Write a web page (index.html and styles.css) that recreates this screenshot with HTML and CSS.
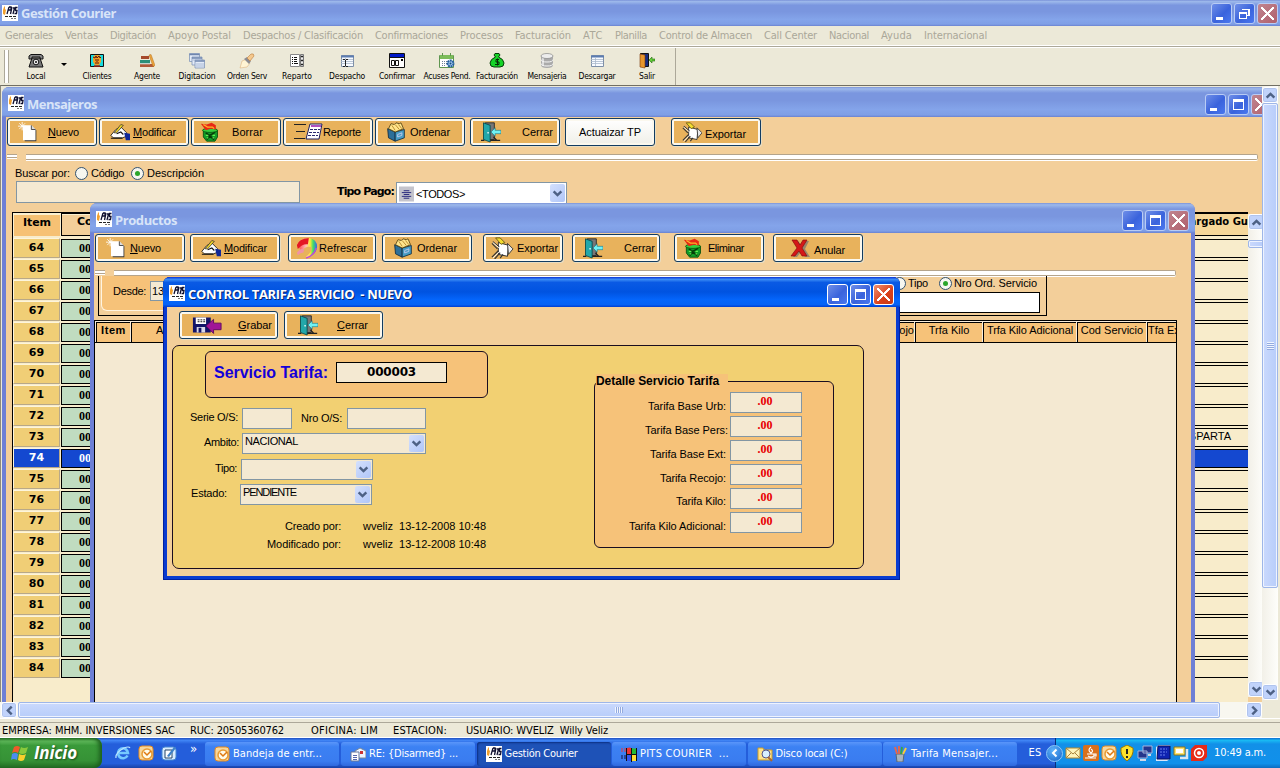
FILE: index.html
```html
<!DOCTYPE html>
<html lang="es">
<head>
<meta charset="utf-8">
<title>Gestión Courier</title>
<link rel="stylesheet" href="styles.css">
</head>
<body>
<svg class="defs" aria-hidden="true">
  <defs><linearGradient id="rb" x1="0" x2="1"><stop stop-color="#f33"/><stop offset=".45" stop-color="#fbb"/><stop offset=".65" stop-color="#fe3"/><stop offset=".8" stop-color="#4d6"/><stop offset="1" stop-color="#36e"/></linearGradient></defs>
  <symbol id="pits" viewBox="0 0 16 16"><rect width="16" height="16" fill="#fff"/><path d="M2 2l1-1v3l1 1-1 5-2-1V5z" fill="#f0a030"/><path d="M5 9l2-7M7 2h2v3H6M10 2L8.500 9M11 3h3M12.500 3L11 9M15.500 2.500h-2l0 3h1.500l-.5 3h-2" stroke="#101030" stroke-width="1.300" fill="none"/><path d="M3 11.500h12" stroke="#222" stroke-dasharray="3 1"/><path d="M9 13.500h6" stroke="#777" stroke-dasharray="2 1"/></symbol>
  <symbol id="phone" viewBox="0 0 16 16"><path d="M1 6V3l2-1.500h10L15 3v3h-3V4H4v2z" fill="#888" stroke="#111"/><path d="M4 5h8l3 9H1z" fill="#777" stroke="#111"/><circle cx="8" cy="9" r="2.800" fill="#eee" stroke="#111"/><circle cx="8" cy="9" r="1" fill="#111"/></symbol>
  <symbol id="clients" viewBox="0 0 16 16"><path d="M1.500 1.500h13v12h-13z" fill="#18dce0" stroke="#111"/><path d="M4 4l2-2h4l2 2v5l-2 3H6L4 9z" fill="#f0a028"/><path d="M4 4l2 1 1-2 1 2 2-2 1 2 1-1M6 7h1m2 0h1M6 10h4M8 6v3" stroke="#601808" fill="none"/><path d="M5 13h6" stroke="#a02010" stroke-width="1.500"/></symbol>
  <symbol id="books" viewBox="0 0 16 16"><path d="M2 3h8v3H2z" fill="#a64a2c"/><path d="M1 7h10v3.500H1z" fill="#2c8f78"/><path d="M1 11h14v3H1z" fill="#b05a38"/><path d="M10 2l2-.5 4 11-2 1z" fill="#eca53c" stroke="#b57020" stroke-width=".5"/><path d="M1 10.800h10" stroke="#ddd"/></symbol>
  <symbol id="sheets" viewBox="0 0 16 16"><g fill="#e3ebf8" stroke="#8296b8" stroke-width=".8"><path d="M.5.5h10v8H.5z"/><path d="M3 4h10v8H3z"/><path d="M6 7h9.500v8H6z"/></g><path d="M.5 1.500h10M3 5h10M6 8h9.500" stroke="#7086ae" stroke-width="1.600"/><path d="M7 11h8M7 13h8M4 7h8" stroke="#94a8c8" stroke-width=".7"/></symbol>
  <symbol id="brush" viewBox="0 0 16 16"><path d="M1 15l2-7 5-2 3 4-3 4z" fill="#fff4d4" stroke="#d9a870" stroke-width=".5"/><path d="M5 6l3-2 4 4-2 3z" fill="#8c8c92"/><path d="M8 5l4-4q3-1 3 2l-4 5z" fill="#f5c88c" stroke="#bb7d40" stroke-width=".6"/></symbol>
  <symbol id="report" viewBox="0 0 16 16"><path d="M1.500 1.500h9v12h-9z" fill="#fff" stroke="#888"/><path d="M3 4.500h1m1 0h3M3 6.500h1m1 0h3M3 8.500h1m1 0h3M3 10.500h1m1 0h4" stroke="#111"/><path d="M11.500 1.500h3v12h-3z" fill="#eee" stroke="#777"/><path d="M12 3.500h2m-2 4h2m-2 4h2" stroke="#222" stroke-width="1.500"/></symbol>
  <symbol id="table" viewBox="0 0 16 16"><path d="M2.500 2.500h12v11h-12z" fill="#f8fbff" stroke="#7f90a8"/><path d="M2 3.500h13" stroke="#5c7cb0" stroke-width="2"/><path d="M2 6.500h12M2 8.500h12M2 10.500h12M6.500 5v8" stroke="#a9b9cc" stroke-width=".8"/></symbol>
  <symbol id="dispatch" viewBox="0 0 16 16"><use href="#table"/><path d="M4 6.500h2m1 0h2M6.500 7v6M4 13.500h2m1 0h2" stroke="#222"/></symbol>
  <symbol id="calendar" viewBox="0 0 16 16"><path d="M.5.5h15v14H.5z" fill="#fff" stroke="#111"/><path d="M1 2.500h14" stroke="#0018c8" stroke-width="3"/><path d="M1 4.500h14M2.500 7.500h3v5h-3zm4 0h3v5h-3z" fill="none" stroke="#111"/><path d="M12 6h2v2h-2z"/></symbol>
  <symbol id="pend" viewBox="0 0 16 16"><path d="M.5 2.500h14v12H.5z" fill="#fff" stroke="#5f9650"/><path d="M1 4h13" stroke="#7dbc5a" stroke-width="4"/><path d="M3.500 0v3m8-3v3" stroke="#5f9650"/><path d="M3 8.500h5M3 10.500h5M3 12.500h4" stroke="#6d7f9a" stroke-dasharray="1 1"/><circle cx="11.500" cy="10.500" r="3" fill="#9fc6ee" stroke="#255f9f" stroke-width="2" stroke-dasharray="2 .6"/><circle cx="11.500" cy="10.500" r="1" fill="#174d80"/></symbol>
  <symbol id="money" viewBox="0 0 16 16"><path d="M6 .5h4L11 2 9.500 4q5 2 5.500 6 0 4-4 4H5q-4 0-4-4 .5-4 5.500-6L5 2z" fill="#16d428" stroke="#063c08"/><path d="M10 6.500H7V9h3v2.500H6M8.500 5.500v7" fill="none" stroke="#052c06"/></symbol>
  <symbol id="database" viewBox="0 0 16 16"><path d="M2 3v9q0 3 6 3t6-3V3" fill="#aaa"/><path d="M4 4v9" stroke="#ddd" stroke-width="2"/><ellipse cx="8" cy="3" rx="6" ry="2.500" fill="#ededed" stroke="#888" stroke-width=".7"/><path d="M2 6.500q0 2.500 6 2.500t6-2.500M2 10.500q0 2.500 6 2.500t6-2.500" fill="none" stroke="#f6f6f6"/></symbol>
  <symbol id="exit" viewBox="0 0 16 16"><path d="M1.500.5h8v13h-8z" fill="#182c80" stroke="#111"/><path d="M1 1l5 1v13l-5-1z" fill="#e8962c" stroke="#7a3808" stroke-width=".6"/><path d="M10 7l3-3v2h3v2h-3v2z" fill="#62cc38" stroke="#216b0c" stroke-width=".6"/></symbol>
  <symbol id="new" viewBox="0 0 24 24"><path d="M8 5h9l5 5v13H8z" fill="#333"/><path d="M6 4h10l5 5v13H6z" fill="#fff"/><path d="M16 4v5h5" fill="#ddd" stroke="#333"/><path d="M5 0v10M0 5h10M1.500 1.500l7 7M8.500 1.500l-7 7" stroke="#fff"/></symbol>
  <symbol id="edit" viewBox="0 0 24 20"><path d="M1 14l6-7 6-3 7 7v4l-5 2H4z" fill="#fff" stroke="#111"/><path d="M17 11l7 1v8h-5z" fill="#102898"/><path d="M5 11L13 1l3 1-8 9z" fill="#f0d428" stroke="#222" stroke-width=".8"/><path d="M1 17.500h14M8 12l5-2 3 3" fill="none" stroke="#111" stroke-width="1.300"/></symbol>
  <symbol id="bin" viewBox="0 0 24 24"><path d="M4 10h17v8l-3 5H8l-4-5z" fill="#119c28" stroke="#064d0c"/><path d="M7 13l4 3 3-1 4-3M8 21l4-4 5 4" stroke="#063c08" stroke-width="2" fill="none"/><path d="M7 16h3M15 16h3M8 19h2m5 0h2" stroke="#64f050" stroke-width="1.500"/><ellipse cx="12" cy="10" rx="9" ry="2.500" fill="#35cf3c" stroke="#075210"/><path d="M1 2l7 1 6-2 5 3v5l-6-1-6 2z" fill="#e82814"/><path d="M4 3l5 3h6l2 2" stroke="#ffb428" fill="none" stroke-width="1.500"/></symbol>
  <symbol id="rep" viewBox="0 0 30 20"><path d="M1 2.500h12M3 9.500h9M1 16.500h11" stroke="#222"/><path d="M17 2h12l-3 15H13z" fill="#fff" stroke="#202060"/><path d="M18 4h10" stroke="#b050c0" stroke-width="2"/><path d="M17 7.500h10M16 10.500h10M15 13.500h10" stroke="#2a2a70" stroke-dasharray="3 1"/></symbol>
  <symbol id="sort" viewBox="0 0 24 24"><path d="M2 8l9 4v11l-8-4z" fill="#2d6f98" stroke="#0d2940"/><path d="M11 12l11-3v10l-11 4z" fill="#479cc4" stroke="#0d2940"/><path d="M3 8l3-6 4 1 2-2 4 1 2-1 3 7-10 4z" fill="#ffe58c" stroke="#514010"/><path d="M7 4l4 6M11 3l5 6M15 3l4 5" stroke="#b07d20"/><path d="M14 15l5-2v3l-5 2z" fill="none" stroke="#cce"/></symbol>
  <symbol id="close" viewBox="0 0 24 24"><path d="M5 1h11v20H5z" fill="#777" stroke="#222"/><path d="M3 1l8 3v20l-8-3z" fill="#22a7aa" stroke="#064548"/><path d="M12 12l5-5v3h7v4h-7v3z" fill="#70f2f4" stroke="#147080" stroke-width=".7"/><path d="M0 22h4m7 0h12M15 18l4 4" stroke="#222" stroke-width="1.500"/><circle cx="8.500" cy="13" r="1" fill="#fff"/></symbol>
  <symbol id="export" viewBox="0 0 24 24"><path d="M8 6l11 3-1 12-10-2z" fill="#fff" stroke="#222"/><path d="M18 7l6 6-5 6z" fill="#eaeaea" stroke="#333"/><path d="M5 1l5 0 5 5-4 2z" fill="#f3dc30" stroke="#6a5b10"/><path d="M2 5l7 6M1 7l6 6M1 22l7-7M4 24l6-7m0 6l3-4" stroke="#333" stroke-width="1.300"/><path d="M2 6l7 6M2 23l7-7" stroke="#fff"/></symbol>
  <symbol id="refresh" viewBox="0 0 24 24"><path d="M1 9q2-7 13-8 9 1 9 10-1 8-10 12l-2-2q6-3 6-10-6-2-11 4z" fill="url(#rb)"/><path d="M1 9q2-7 13-8l-1 7q-6-1-11 5z" fill="#e51824"/><path d="M1 17q5-6 8-3l-1 3q-3 0-6 3z" fill="#f092a8"/><path d="M11 23q9-3 11-11" stroke="#bf45dc" stroke-width="1.500" fill="none"/></symbol>
  <symbol id="cancel" viewBox="0 0 20 20"><path d="M4 4l4-1 4 5 3-5h4l-4 8 5 8h-5l-4-5-4 5H3l5-8z" fill="#99846a"/><path d="M2 2h5l3 5 3-5h4l-5 8 5 8h-5l-3-5-4 5H1l6-8z" fill="#d41818" stroke="#7c0808" stroke-width=".6"/></symbol>
  <symbol id="save" viewBox="0 0 32 20"><path d="M1 2h19v16H1z" fill="#121468"/><path d="M4 2h11v7H4z" fill="#fff"/><path d="M6 4.500h8M6 6.500h8" stroke="#111" stroke-dasharray="2 1"/><path d="M5 12h9v6H5z" fill="#d8d8e8"/><path d="M7 13h3v5H7z" fill="#121468"/><path d="M15 11l8-7v4h8v7h-8v4z" fill="#a01498" stroke="#600c60"/></symbol>
  <symbol id="flag" viewBox="0 0 18 18"><path d="M3 3q3-2 6 0L7 9Q4 7 1 9z" fill="#ef5a2a"/><path d="M10 3q3 2 7 0l-2 6q-4 2-7 0z" fill="#89c93c"/><path d="M1 10q3-2 6 0l-1 6q-4-2-6 0z" fill="#4a8df0"/><path d="M8 10q4 2 7 0l-2 6q-3 2-6 0z" fill="#f9cf2c"/></symbol>
  <symbol id="ie" viewBox="0 0 16 16"><path d="M12.500 10.500A5 5 0 1 1 13 8H4" fill="none" stroke="#75c9ff" stroke-width="2.600"/><path d="M1 13Q0 8 9 3q5-2 6 0" fill="none" stroke="#bde6ff" stroke-width="1.200"/></symbol>
  <symbol id="outlook" viewBox="0 0 16 16"><rect x="1" y="1" width="14" height="14" rx="3" fill="#f7d79c" stroke="#e58a1f"/><circle cx="9" cy="9" r="5" fill="#fffbe8" stroke="#e89b33" stroke-width="1.500"/><path d="M6 7l3 3 4-4" fill="none" stroke="#df7810" stroke-width="1.500"/></symbol>
  <symbol id="desk" viewBox="0 0 16 16"><rect x="1" y="2" width="14" height="13" rx="3" fill="#d8ecff" stroke="#4688d0"/><path d="M4 5h7v8H4z" fill="#fff" stroke="#246"/><path d="M6 11l7-9 2 1-7 9z" fill="#3e82c8"/></symbol>
  <symbol id="mail" viewBox="0 0 16 16"><path d="M5 5l5-3 6 3v7H5z" fill="#eef4ff" stroke="#789"/><path d="M1 6h8v9H1z" fill="#fff" stroke="#679"/><path d="M3 9.500h4M3 11.500h4M3 13.500h4" stroke="#56a"/><path d="M10 5h3v3h-3z" fill="#c33"/></symbol>
  <symbol id="win98" viewBox="0 0 16 16"><path d="M6 2q3-1 4 0V8H6z" fill="#e33"/><path d="M0 3h5M0 5h5" stroke="#e33" stroke-dasharray="2 1"/><path d="M11 2q2 1 5 0v6q-3 1-5 0z" fill="#2b3"/><path d="M6 9h4v6H6z" fill="#35e"/><path d="M0 10h5M0 12h5" stroke="#114" stroke-dasharray="2 1"/><path d="M11 9h5v6h-5z" fill="#fd3"/><path d="M5.500 2v13M10.500 2v14M15.500 2v13M6 8.500h10" stroke="#111"/></symbol>
  <symbol id="folder" viewBox="0 0 16 16"><path d="M1 2h5l1 2h8v10H1z" fill="#ffe28a" stroke="#c79b2d"/><circle cx="9" cy="8" r="4" fill="#d8efff" stroke="#558"/><path d="M11 11l4 4" stroke="#a63" stroke-width="2"/></symbol>
  <symbol id="paint" viewBox="0 0 16 16"><path d="M4 8h8l-1 8H5z" fill="#a9b4be" stroke="#567"/><path d="M5 8L3 1M7 8V0" stroke="#e64" stroke-width="1.800"/><path d="M9 8l1-7" stroke="#3a4" stroke-width="1.800"/><path d="M11 8l3-6" stroke="#fc3" stroke-width="1.800"/></symbol>
  <symbol id="env" viewBox="0 0 16 16"><path d="M1 3h14v10H1z" fill="#fff4b8" stroke="#b18831"/><path d="M1 3l7 6 7-6M1 13l5-5m9 5l-5-5" fill="none" stroke="#a9823a"/></symbol>
  <symbol id="java" viewBox="0 0 16 16"><rect width="16" height="16" rx="2" fill="#d9701c"/><path d="M8 2q-4 3 0 6 3-2 0-4M4 9h7v2q-3 2-6 0M2 13h11M11 9h2v2h-2" fill="none" stroke="#fff" stroke-width="1.200"/></symbol>
  <symbol id="shield" viewBox="0 0 16 16"><path d="M8 0l6 3q1 8-6 13Q1 11 2 3z" fill="#ffe22c" stroke="#9b7900"/><path d="M8 4v5m0 2v2" stroke="#222" stroke-width="2"/></symbol>
  <symbol id="net" viewBox="0 0 16 16"><path d="M6 1h9v7H6zM1 6h9v7H1z" fill="#24358c" stroke="#a4b3dc"/><path d="M3 15h6m2-5h3" stroke="#cfd8e8" stroke-width="2"/></symbol>
  <symbol id="pad" viewBox="0 0 16 16"><path d="M1 2l3-2h11v14l-3 2H1z" fill="#dce5f8"/><path d="M3 1h12v13H2z" fill="#0e23b0" stroke="#06105a"/><path d="M5 4h7M5 7h7M5 10h6" stroke="#6b83ec" stroke-dasharray="2 1"/></symbol>
  <symbol id="mon" viewBox="0 0 16 16"><path d="M1 2h11v8H1z" fill="#ffe36a" stroke="#8a741b"/><path d="M3 4h7v4H3z" fill="#fff"/><path d="M7 13h7V4" fill="none" stroke="#dde6f0" stroke-width="2.500"/></symbol>
  <symbol id="eye" viewBox="0 0 16 16"><path d="M4 0h12v12l-4 4H0V4z" fill="#e52a17"/><circle cx="8" cy="8" r="4.500" fill="none" stroke="#fff" stroke-width="1.500"/><circle cx="8" cy="8" r="2" fill="#fff"/></symbol>
  <symbol id="down" viewBox="0 0 10 10"><path d="M1.500 3L5 6.500 8.500 3" fill="none" stroke="#4d6185" stroke-width="2.200"/></symbol>
</svg>

<header class="title app-title idle"><svg class="i16"><use href="#pits"/></svg><b data-w="95">Gestión Courier</b><div class="ctl"><i class="min"></i><i class="rest"></i><i class="x"></i></div></header>
<nav class="menu"><span data-w="48">Generales</span><span data-w="33">Ventas</span><span data-w="46">Digitación</span><span data-w="63">Apoyo Postal</span><span data-w="120">Despachos / Clasificación</span><span data-w="73">Confirmaciones</span><span data-w="43">Procesos</span><span data-w="56">Facturación</span><span data-w="20">ATC</span><span data-w="32">Planilla</span><span data-w="93">Control de Almacen</span><span data-w="53">Call Center</span><span data-w="40">Nacional</span><span data-w="31">Ayuda</span><span data-w="63">Internacional</span></nav>
<div class="toolbar"><div class="tools">
  <div class="grip"></div>
  <div class="tool"><svg><use href="#phone"/></svg><span data-w="19">Local</span></div><div class="drop"></div>
  <div class="tool"><svg><use href="#clients"/></svg><span data-w="29">Clientes</span></div>
  <div class="tool"><svg><use href="#books"/></svg><span data-w="26">Agente</span></div>
  <div class="tool"><svg><use href="#sheets"/></svg><span data-w="37">Digitacion</span></div>
  <div class="tool"><svg><use href="#brush"/></svg><span data-w="40">Orden Serv</span></div>
  <div class="tool"><svg><use href="#report"/></svg><span data-w="30">Reparto</span></div>
  <div class="tool"><svg><use href="#dispatch"/></svg><span data-w="36">Despacho</span></div>
  <div class="tool"><svg><use href="#calendar"/></svg><span data-w="36">Confirmar</span></div>
  <div class="tool"><svg><use href="#pend"/></svg><span data-w="47">Acuses Pend.</span></div>
  <div class="tool"><svg><use href="#money"/></svg><span data-w="42">Facturación</span></div>
  <div class="tool"><svg><use href="#database"/></svg><span data-w="39">Mensajeria</span></div>
  <div class="tool"><svg><use href="#table"/></svg><span data-w="37">Descargar</span></div>
  <div class="tool"><svg><use href="#exit"/></svg><span data-w="16">Salir</span></div>
</div></div>

<div class="workspace">
<main class="mdi">
  <section class="win w-mens">
    <div class="title idle"><svg class="i16"><use href="#pits"/></svg><b data-w="70">Mensajeros</b><div class="ctl"><i class="min"></i><i class="max"></i><i class="x"></i></div></div>
    <div class="body">
      <div class="btns">
        <button><svg class="ic"><use href="#new"/></svg><span class="g10" data-w="31"><u>N</u>uevo</span></button>
        <button><svg class="ic"><use href="#edit"/></svg><span class="g2" data-w="43"><u>M</u>odificar</span></button>
        <button><svg class="ic up1"><use href="#bin"/></svg><span class="g10" data-w="31">Borrar</span></button>
        <button><svg class="wide"><use href="#rep"/></svg><span data-w="38">Reporte</span></button>
        <button><svg class="ic"><use href="#sort"/></svg><span class="g4" data-w="40">Ordenar</span></button>
        <button class="m3"><svg class="ic"><use href="#close"/></svg><span class="g20" data-w="31">Cerrar</span></button>
        <button class="m3 white"><span data-w="62">Actuaizar TP</span></button>
        <button class="m14"><svg class="ic"><use href="#export"/></svg><span class="g2 low" data-w="41">Exportar</span></button>
      </div>
      <div class="rule"><i></i></div>
      <div class="find"><span data-w="55">Buscar por:</span><i class="radio"></i><span data-w="33">Código</span><i class="radio on"></i><span data-w="57">Descripción</span></div>
      <div class="findrow"><div class="inp"></div><b data-w="57">Tipo Pago:</b><div class="combo pay"><svg viewBox="0 0 16 16"><path d="M0 0h16v16H0z" fill="#c4c4cc"/><path d="M5 4.500h6M3 6.500h10M5 8.500h6M3 10.500h10M5 12.500h6" stroke="#22227a"/></svg><span data-w="49">&lt;TODOS&gt;</span><em><svg><use href="#down"/></svg></em></div></div>
      <div class="listwrap">
        <div class="list">
          <div class="lh"><b><span data-w="28">Item</span></b><b class="cod">Co</b><b class="enc"><span>argado Gu</span></b></div>
          <div id="rows"></div>
        </div>
        <div class="vs inner"><em class="up"><svg><use href="#down"/></svg></em><div class="thumb"></div><em class="dn"><svg><use href="#down"/></svg></em></div>
      </div>
    </div>
  </section>

  <section class="win w-prod">
    <div class="title idle"><svg class="i16"><use href="#pits"/></svg><b data-w="62">Productos</b><div class="ctl"><i class="min"></i><i class="max"></i><i class="x"></i></div></div>
    <div class="body">
      <div class="btns">
        <button><svg class="ic"><use href="#new"/></svg><span class="g4" data-w="31"><u>N</u>uevo</span></button>
        <button class="m3"><svg class="ic"><use href="#edit"/></svg><span class="g2" data-w="43"><u>M</u>odificar</span></button>
        <button class="m6 b88"><svg class="ic tight"><use href="#refresh"/></svg><span data-w="48">Refrescar</span></button>
        <button class="m4"><svg class="ic"><use href="#sort"/></svg><span class="g4" data-w="40">Ordenar</span></button>
        <button class="m9 b80"><svg class="ic tight"><use href="#export"/></svg><span class="g2" data-w="41">Exportar</span></button>
        <button class="m7 b88"><svg class="ic"><use href="#close"/></svg><span class="g20" data-w="31">Cerrar</span></button>
        <button class="m12"><svg class="ic up1"><use href="#bin"/></svg><span class="g2" data-w="36">Eliminar</span></button>
        <button class="m7"><svg class="ic far"><use href="#cancel"/></svg><span class="low g4" data-w="31">Anular</span></button>
      </div>
      <div class="rule"><i></i></div>
      <div class="filter">
        <div class="fl"><span data-w="33">Desde:</span><div class="date">13</div></div>
        <div class="fr"><div class="opts"><i class="radio"></i><span data-w="20">Tipo</span><i class="radio on"></i><span data-w="83">Nro Ord. Servicio</span></div><div class="inp2"></div></div>
      </div>
      <div class="pgrid"><div class="ph"><b class="c1" data-w="25">Item</b><span class="c2">Ar</span><span class="c3">Recojo</span><span class="c4">Trfa Kilo</span><span class="c5">Trfa Kilo Adicional</span><span class="c6">Cod Servicio</span><span class="c7">Tfa Ex</span></div></div>
    </div>
  </section>

  <section class="win w-dlg">
    <div class="title active"><svg class="i16"><use href="#pits"/></svg><b data-w="224">CONTROL TARIFA SERVICIO  - NUEVO</b><div class="ctl"><i class="min"></i><i class="max"></i><i class="x"></i></div></div>
    <div class="body">
      <div class="btns">
        <button><svg class="wide"><use href="#save"/></svg><span class="g14" data-w="34"><u>G</u>rabar</span></button>
        <button><svg class="ic"><use href="#close"/></svg><span class="g17" data-w="31"><u>C</u>errar</span></button>
      </div>
      <div class="panel">
        <div class="left">
          <div class="serv"><b data-w="114">Servicio Tarifa:</b><div><strong data-w="49">000003</strong></div></div>
          <div class="ln l1"><span data-w="48">Serie O/S:</span><div class="inp w50"></div><span class="nro" data-w="41">Nro O/S:</span><div class="inp w79"></div></div>
          <div class="ln l2"><span data-w="35">Ambito:</span><div class="combo w184"><span data-w="53">NACIONAL</span><em><svg><use href="#down"/></svg></em></div></div>
          <div class="ln l3"><span data-w="22">Tipo:</span><div class="combo w132"><em><svg><use href="#down"/></svg></em></div></div>
          <div class="ln l4"><span data-w="36">Estado:</span><div class="combo w132"><span data-w="53">PENDIENTE</span><em><svg><use href="#down"/></svg></em></div></div>
          <div class="log l5"><span data-w="56">Creado por:</span><span data-w="123">wveliz  13-12-2008 10:48</span></div>
          <div class="log"><span data-w="74">Modificado por:</span><span data-w="123">wveliz  13-12-2008 10:48</span></div>
        </div>
        <div class="detail">
          <h2><span data-w="123">Detalle Servicio Tarifa</span></h2>
          <div class="t"><span data-w="78">Tarifa Base Urb:</span><b>.00</b></div>
          <div class="t pers"><span data-w="83">Tarifa Base Pers:</span><b>.00</b></div>
          <div class="t"><span data-w="76">Tarifa Base Ext:</span><b>.00</b></div>
          <div class="t"><span data-w="66">Tarifa Recojo:</span><b>.00</b></div>
          <div class="t kilo"><span data-w="50">Tarifa Kilo:</span><b>.00</b></div>
          <div class="t"><span data-w="97">Tarifa Kilo Adicional:</span><b>.00</b></div>
        </div>
      </div>
    </div>
  </section>
</main>
<div class="vs outer"><em class="up"><svg><use href="#down"/></svg></em><div class="thumb"><i></i></div><em class="dn"><svg><use href="#down"/></svg></em></div>
</div>
<div class="hs"><em class="lf"><svg><use href="#down"/></svg></em><div class="thumb"><i></i></div><em class="rt"><svg><use href="#down"/></svg></em></div>
<div class="status"><span data-w="173">EMPRESA: MHM. INVERSIONES SAC</span><span class="s2" data-w="94">RUC: 20505360762</span><span class="s3" data-w="67">OFICINA: LIM</span><span class="s4" data-w="54">ESTACION:</span><span class="s5" data-w="142">USUARIO: WVELIZ  Willy Veliz</span></div>
<footer class="task">
  <div class="start"><svg><use href="#flag"/></svg><b data-w="43">Inicio</b></div>
  <div class="quick"><svg><use href="#ie"/></svg><svg><use href="#outlook"/></svg><svg><use href="#desk"/></svg><span>»</span></div>
  <div class="tb"><svg><use href="#outlook"/></svg><span data-w="89">Bandeja de entr...</span></div>
  <div class="tb"><svg><use href="#mail"/></svg><span data-w="89">RE: {Disarmed} ...</span></div>
  <div class="tb cur"><svg><use href="#pits"/></svg><span data-w="73">Gestión Courier</span></div>
  <div class="tb"><svg><use href="#win98"/></svg><span data-w="89">PITS COURIER  ...</span></div>
  <div class="tb"><svg><use href="#folder"/></svg><span data-w="72">Disco local (C:)</span></div>
  <div class="tb"><svg><use href="#paint"/></svg><span data-w="87">Tarifa Mensajer...</span></div>
  <span class="es" data-w="13">ES</span>
  <div class="tray"><div class="chev"><svg viewBox="0 0 10 10"><path d="M6.500 1.500L3 5l3.500 3.500" fill="none" stroke="#fff" stroke-width="2"/></svg></div><svg><use href="#env"/></svg><svg><use href="#java"/></svg><svg><use href="#outlook"/></svg><svg><use href="#shield"/></svg><svg><use href="#net"/></svg><svg><use href="#pad"/></svg><svg><use href="#mon"/></svg><svg><use href="#eye"/></svg><span class="clock" data-w="52">10:49 a.m.</span></div>
</footer>
<script src="app.js"></script>
</body>
</html>
```

FILE: app.js
```js
// Fill the messenger list.
const rows = document.getElementById('rows');
for (let n = 64; n <= 84; n++) {
  const row = document.createElement('div');
  row.className = 'row' + (n === 74 ? ' sel' : '');
  row.innerHTML = `<b>${n}</b><b class="cod">00</b><span class="rest">${n === 73 ? 'SPARTA' : ''}</span>`;
  rows.append(row);
}

// Track each label so that it takes the width declared in data-w.
document.querySelectorAll('[data-w]').forEach(el => {
  const r = document.createRange();
  r.selectNodeContents(el);
  const natural = r.getBoundingClientRect().width;
  const spacing = (el.dataset.w - natural) / el.textContent.length;
  el.style.letterSpacing = spacing.toFixed(3) + 'px';
});
```

FILE: styles.css
```css
*, *::before { box-sizing: border-box; }
body { margin: 0; width: 1280px; height: 768px; overflow: hidden; display: flex; flex-direction: column; background: #ece9d8; font: 11px/14px "DejaVu Sans Condensed", "DejaVu Sans", sans-serif; color: #000; }
[data-w], .title b { white-space: pre; }
em, i { font-style: normal; }
.defs { position: absolute; width: 0; height: 0; }
svg { display: block; flex: none; }
.i16 { width: 16px; height: 16px; margin-top: -3px; }

/* title bars */
.title { display: flex; align-items: center; height: 30px; flex: none; padding: 4px 6px 0 6px; gap: 3px; }
.title b { font: bold 13px/18px "Open Sans", "Noto Sans", sans-serif; }
.idle { background: linear-gradient(#7a92d8 0, #9db9eb 6%, #7a96df 20%, #7a96df 45%, #84a4ea 75%, #7f9fe6 93%, #6a82d0); color: #d8e4f8; }
.active { background: linear-gradient(#0831d9 0, #3b8cf5 8%, #0a5ae4 18%, #0053e1 50%, #0465fb 75%, #0562f5 92%, #003dd0); color: #fff; text-shadow: 1px 1px #0a246a; }
.app-title { height: 26px; padding: 0 2px; }
.app-title .i16 { margin-top: 0; }
.ctl { margin-left: auto; display: flex; gap: 2px; }
.ctl i { width: 21px; height: 21px; border: 1px solid #b9ccf5; border-radius: 3px; background: linear-gradient(135deg, #6f8fe8, #3a63dc 55%, #4a78ef); display: grid; place-items: center; }
.ctl i::before { content: ""; }
.ctl .min::before { width: 7px; height: 3px; background: #fff; margin: 10px 5px 0 0; }
.ctl .max::before { width: 11px; height: 11px; border: 1px solid #fff; border-top-width: 3px; }
.ctl .rest::before { width: 8px; height: 7px; border: 1px solid #fff; border-top-width: 2px; margin: 4px 4px 0 0; box-shadow: 2px -3px 0 -1px #4a6fe0, 3px -3px 0 0 #fff; }
.ctl .x { background: linear-gradient(135deg, #c08590, #b0606c); }
.ctl .x::before { width: 13px; height: 13px; background: linear-gradient(45deg, transparent 44%, #fff 44% 56%, transparent 56%), linear-gradient(-45deg, transparent 44%, #fff 44% 56%, transparent 56%); }
.active .ctl i { border-color: #fff; }
.active .ctl .x { background: linear-gradient(135deg, #f09070, #d9401a 60%, #c83a12); }

.menu { height: 21px; flex: none; display: flex; gap: 12px; padding: 2px 0 0 5px; color: #aaa798; border-bottom: 1px solid #aca899; box-shadow: inset 0 -1px #fff; }
.menu span { line-height: 15px; }
.toolbar { height: 39px; flex: none; border-top: 1px solid #fff; border-bottom: 1px solid #aca899; }
.tools { height: 37px; display: flex; width: 676px; border-right: 1px solid #aca899; }
.grip { width: 5px; margin: 2px 2px 2px 4px; border: 1px solid #aca899; border-width: 0 1px; background: #fff; }
.tool { width: 50px; display: flex; flex-direction: column; align-items: center; padding-top: 5px; }
.tool svg { width: 16px; height: 16px; }
.tool span { font: 8.500px/11px "DejaVu Sans Condensed", sans-serif; margin-top: 2px; }
.drop { width: 11px; padding-top: 15px; }
.drop::before { content: ""; display: block; width: 0; border: 3px solid transparent; border-top-color: #000; }

/* document area */
.workspace { flex: none; display: flex; border-left: 1px solid #8d8a7c; border-top: 1px solid #716f64; margin-top: -1px; height: 617px; }
.mdi { position: relative; width: 1261px; height: 616px; overflow: hidden; background: #ece9d8; }
.win { position: absolute; border-radius: 7px 7px 0 0; overflow: hidden; display: flex; flex-direction: column; background: #6d7fd6; }
.w-mens { left: 1px; top: 1px; width: 1276px; height: 640px; }
.w-prod { left: 89px; top: 117px; width: 1105px; height: 520px; }
.w-dlg { left: 162px; top: 191px; width: 737px; height: 303px; background: #0a3bd0; box-shadow: inset 0 0 0 1px #0020a0; }
.body { background: #f3cf9a; flex: 1; margin: 0 4px; display: flex; flex-direction: column; min-height: 0; }
.w-dlg .body { margin-bottom: 4px; }

.btns { display: flex; gap: 2px; padding: 1px 0 0 1px; font: 11px/14px "Liberation Sans", sans-serif; flex: none; }
button { width: 90px; height: 28px; flex: none; border: 1px solid #123c62; border-radius: 3px; background: #e8b25c; box-shadow: inset 0 0 0 2px #fbf8ee, 1px 1px #e8dcc0; padding: 0 0 0 10px; margin: 0; display: flex; align-items: center; font: inherit; color: #000; overflow: hidden; }
button .ic { width: 20px; height: 22px; }
button .ic.up1 { margin-left: -2px; margin-right: 2px; }
button .wide { width: 30px; height: 20px; margin-left: -1px; }
button.white { background: linear-gradient(#fff, #f0efe8); padding-left: 13px; }
.g2 { margin-left: 3px; } .g4 { margin-left: 4px; } .g10 { margin-left: 10px; } .g14 { margin-left: 16px; } .g17 { margin-left: 19px; } .g20 { margin-left: 21px; }
.low { padding-top: 3px; }
.m3 { margin-left: 3px; } .m4 { margin-left: 4px; } .m6 { margin-left: 6px; } .m7 { margin-left: 7px; } .m9 { margin-left: 9px; } .m12 { margin-left: 12px; } .m14 { margin-left: 14px; }
.b88 { width: 88px; } .b80 { width: 80px; }
button .ic.tight { width: 24px; margin-left: -4px; }
button .ic.far { margin-left: 6px; }
.rule { height: 5px; margin: 8px 0 0 1px; display: flex; flex: none; width: 1251px; gap: 9px; }
.rule i, .rule::after { content: ""; border: 1px solid #b4a48c; border-width: 1px 0; background: #fff; box-shadow: 0 1px #fff; width: 10px; height: 4px; }
.rule::after { flex: 1; border-right-width: 1px; border-radius: 0 2px 2px 0; }

.find { display: flex; align-items: center; height: 22px; padding: 6px 0 0 9px; font-family: "Liberation Sans", sans-serif; flex: none; }
.radio { width: 13px; height: 13px; border-radius: 50%; border: 1px solid #33526f; background: #f6f6f0; margin: 0 3px 0 5px; display: grid; place-items: center; flex: none; }
.find .radio.on { margin-left: 7px; }
.radio.on::before { content: ""; width: 5px; height: 5px; border-radius: 50%; background: #2aa52a; }
.findrow { display: flex; padding-left: 10px; flex: none; align-items: flex-start; height: 22px; }
.inp { border: 1px solid #8296a4; background: #f4e9d2; height: 22px; width: 284px; flex: none; }
.findrow b { margin-left: 37px; line-height: 22px; font-family: "DejaVu Sans", sans-serif; }
.combo { display: flex; border: 1px solid #8296a4; background: #f4e9d2; height: 21px; padding-right: 1px; flex: none; font-family: "Liberation Sans", sans-serif; }
.combo span { padding-left: 2px; }
.combo em { margin: 1px 0 1px auto; width: 15px; background: linear-gradient(135deg, #d4e0fd, #b0c6f8); border-radius: 2px; display: grid; place-items: center; }
em svg { width: 11px; height: 11px; }
.pay { width: 171px; background: #fff; margin: 1px 0 0 2px; height: 22px; padding-left: 2px; }
.pay > svg { width: 15px; height: 16px; margin-top: 3px; }
.pay span { padding-top: 4px; }

/* messenger list */
.listwrap { display: flex; margin: 9px 0 0 6px; flex: 1; min-height: 0; }
.list { width: 1236px; border-left: 1px solid #000; border-top: 1px solid #000; background: #f8eccb; font-family: "DejaVu Sans", sans-serif; flex: none; }
.lh { display: flex; height: 23px; margin-bottom: 3px; line-height: 16px; }
.lh b { width: 48px; text-align: center; background: #f6c174; border: 2px solid #fbf0d0; border-width: 2px 1px 0; }
.lh .cod { background: #f3cf9a; width: 60px; text-align: left; padding-left: 15px; border: 1px solid #000; border-width: 1px 0 1px 1px; box-shadow: inset 0 1px #fbf0d0; }
.lh .enc { width: 1127px; background: #f6d79a; display: flex; justify-content: flex-end; font-size: 10px; border: 1px solid #000; border-width: 1px 0 1px; overflow: hidden; }
.row { display: flex; height: 21px; line-height: 15px; }
.row b { width: 47px; height: 20px; margin-top: -1px; text-align: center; background: #f0ce76; border: 1px solid #fdf5dc; border-bottom: 1px solid #b8a888; border-right-color: #b8a888; line-height: 17px; }
.row .cod { width: 60px; margin: 0 0 0 1px; height: 19px; background: #c0dcc0; border: 1px solid #000; text-align: left; padding-left: 17px; font: bold 12px/16px "Liberation Serif", serif; }
.row .rest { width: 1127px; height: 19px; border: 1px solid #000; border-width: 1px 0; text-align: right; padding-right: 17px; font: 11px/15px "Liberation Sans", sans-serif; }
.sel b, .sel .cod, .sel .rest { background: #1448d0; color: #fff; }

.vs { display: flex; flex-direction: column; background: linear-gradient(90deg, #f2f0e8, #fefefb); }
.vs em, .hs em { display: grid; place-items: center; background: #c1d3fb; border: 1px solid #fff; border-radius: 3px; flex: none; box-shadow: inset 0 0 0 1px #b0c4ee; }
.up svg { transform: rotate(180deg); }
.lf svg { transform: rotate(90deg); }
.rt svg { transform: rotate(-90deg); }
.vs em { height: 16px; width: 100%; }
.vs .dn { margin-top: auto; }
.thumb { background: linear-gradient(90deg, #cad9fd, #b8cdfa); border: 1px solid #9eb6e8; border-radius: 2px; box-shadow: inset 0 0 0 1px #eef3ff; display: grid; place-items: center; }
.outer { width: 16px; height: 614px; padding-top: 1px; }
.outer .thumb { height: 485px; }
.outer i { width: 7px; height: 8px; background: repeating-linear-gradient(#f0f5ff 0 1px, #93aadf 1px 2px); }
.inner { width: 16px; margin-top: 2px; height: 483px; flex: none; }
.inner .thumb { height: 8px; margin-top: 10px; }

/* products */
.w-prod .rule { width: 1081px; }
.filter { display: flex; justify-content: space-between; margin: 1px 0 0 4px; width: 949px; height: 40px; border: 1px solid #000; border-top: 0; flex: none; font-family: "Liberation Sans", sans-serif; }
.fl { width: 300px; margin: 0 0 4px 2px; background: #f6c279; border: 1px solid #fff4e0; border-top: 0; border-radius: 0 0 6px 6px; display: flex; padding: 5px 0 0 11px; line-height: 20px; }
.date { margin-left: 4px; height: 20px; width: 80px; background: #f4e9d2; border: 1px solid #8296a4; padding-left: 1px; line-height: 18px; }
.fr { width: 154px; margin-right: 6px; }
.opts { display: flex; align-items: center; height: 16px; margin-top: -1px; margin-bottom: 1px; }
.opts .radio { margin: 0 2px 0 7px; }
.fr { padding-left: 0; }
.opts .radio.on { margin-left: 11px; }
.inp2 { height: 21px; border: 1px solid #000; background: #fff; }
.pgrid { width: 1083px; margin-top: 4px; border: 1px solid #000; background: #f4e9d2; flex: 1; }
.ph { display: flex; height: 22px; padding: 1px 0 0 1px; gap: 1px; border-bottom: 1px solid #000; background: #f8eddc; line-height: 15px; font-family: "Liberation Sans", sans-serif; overflow: hidden; }
.ph > * { background: #f6c279; border-left: 1px solid #000; border-top: 1px solid #000; text-align: center; flex: none; white-space: nowrap; overflow: hidden; }
.c1 { width: 34px; } .c2 { width: 60px; } .c3 { width: 722px; text-align: right !important; } .c4 { width: 67px; } .c5 { width: 93px; letter-spacing: -.08px; } .c6 { width: 69px; } .c7 { width: 40px; text-align: left !important; }

/* tariff dialog */
.w-dlg .btns { padding: 4px 0 0 12px; gap: 6px; }
.w-dlg button { width: 99px; padding-left: 13px; }
.panel { margin: 6px 0 0 5px; width: 692px; height: 224px; border: 1px solid #1a0d20; border-radius: 7px; background: #f2d072; display: flex; font-family: "Liberation Sans", sans-serif; }
.left { width: 421px; }
.serv { width: 283px; height: 47px; margin: 5px 0 0 32px; border: 1px solid #1a0d20; border-radius: 6px; background: #f6c279; display: flex; padding: 10px 0 0 8px; }
.serv b { font-size: 16px; line-height: 21px; color: #1400d8; }
.serv div { margin-left: 8px; width: 111px; height: 21px; border: 1px solid #000; background: #f4e9d2; text-align: center; font: bold 12px/18px "DejaVu Sans", sans-serif; }
.ln { display: flex; line-height: 18px; }
.ln > .inp, .ln > .combo { margin-left: 4px; height: 21px; line-height: 15px; }
.l1 { margin: 10px 0 0 17px; }
.l2 { margin: 4px 0 0 31px; } .ln.l2 .combo { margin-left: 3px; }
.l3 { margin: 5px 0 0 42px; }
.l4 { margin: 4px 0 0 18px; } .ln.l4 .combo { margin-left: 13px; }
.w50 { width: 50px; } .w79 { width: 79px; } .w184 { width: 184px; } .w132 { width: 132px; }
.ln .nro { margin-left: 9px; line-height: 20px; }
.ln .inp.w79 { margin-left: 5px; }
.log { display: flex; justify-content: flex-end; width: 313px; gap: 22px; line-height: 18px; }
.l5 { margin-top: 12px; }
.detail { margin: 35px 0 0; width: 240px; height: 167px; border: 1px solid #1a0d20; border-radius: 6px; background: #f6c279; }
.detail h2 { margin: -8px 0 3px 1px; width: 132px; background: #f6c279; font-size: 12px; line-height: 15px; }
.t { height: 24px; display: flex; justify-content: flex-end; padding-right: 31px; gap: 4px; }
.t span { line-height: 14px; padding-top: 7px; }
.t b { width: 72px; height: 21px; border: 1px solid #8296a4; background: #f4e9d2; color: #e80000; text-align: center; font: bold 12px/16px "Liberation Serif", serif; padding-right: 2px; }
.t.pers { gap: 2px; }
.kilo span { padding-top: 6px; }

/* bottom bars */
.hs { height: 16px; flex: none; display: flex; padding-left: 1px; width: 1262px; background: #f8f7f0; }
.hs em { width: 16px; height: 16px; }
.hs .thumb { width: 1202px; margin-left: 1px; background: linear-gradient(#cad9fd, #b8cdfa); }
.hs .thumb i { width: 8px; height: 6px; background: repeating-linear-gradient(90deg, #f0f5ff 0 1px, #93aadf 1px 2px); }
.hs .rt { margin-left: auto; }
.status { height: 20px; flex: none; padding: 4px 0 0 2px; display: flex; border-top: 1px solid #fff; box-shadow: inset 0 3px #ece9d8, inset 0 4px #aca899, inset 0 -1px #fff; }
.status span { line-height: 15px; }
.s2 { margin-left: 15px; } .s3 { margin-left: 27px; } .s4 { margin-left: 15px; } .s5 { margin-left: 19px; }
.task { height: 30px; flex: none; display: flex; align-items: center; color: #fff; background: linear-gradient(#1f4fc0, #4085f5 8%, #245edb 20%, #245edb 85%, #1941a5); }
.task svg { width: 16px; height: 16px; }
.start { width: 102px; height: 30px; border-radius: 0 8px 8px 0; background: linear-gradient(#2a7a2a, #5eb85a 10%, #3a9a3a 25%, #369236 75%, #256f25); display: flex; align-items: center; gap: 5px; padding-left: 11px; box-shadow: inset -3px 0 4px #1d5f1d; }
.start b { font: italic bold 17px/24px "Open Sans", "Noto Sans", sans-serif; text-shadow: 1px 1px 2px #1b4b1b; }
.start svg { width: 18px; height: 18px; }
.quick { width: 103px; padding-left: 13px; display: flex; gap: 7px; }
.quick span { margin: -3px 0 0 6px; font-size: 13px; }
.tb { width: 134px; height: 24px; margin: 2px 2px 0 0; border-radius: 3px; background: linear-gradient(#5a96fa, #3c81f3 20%, #3a7cf0 80%, #2f68dd); display: flex; align-items: center; gap: 3px; padding-left: 9px; flex: none; }
.tb + .tb { margin-right: 1.500px; }
.cur { background: #1e52b7; box-shadow: inset 1px 1px 2px #0c2f80; }
.es { margin-left: 10px; }
.tray { width: 225px; height: 30px; background: linear-gradient(#0d6ed0, #19b9f3 8%, #1290e8 20%, #1190ea 85%, #0d6cc0); margin-left: auto; display: flex; align-items: center; gap: 2px; border-left: 1px solid #092e7b; }
.chev { width: 17px; height: 17px; margin-left: -10px; border-radius: 50%; background: radial-gradient(circle at 40% 30%, #5fb4fb, #1563c8); border: 1px solid #8cc8f8; display: grid; place-items: center; flex: none; }
.task .chev svg { width: 10px; height: 10px; }
.clock { margin-left: 5px; }
```
